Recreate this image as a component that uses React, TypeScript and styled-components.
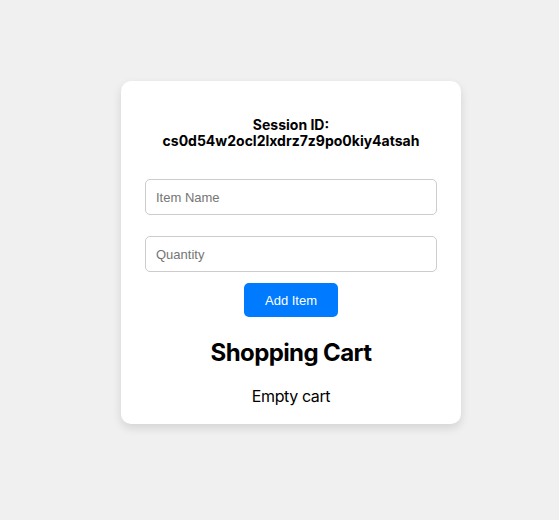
import React from "react";
import styled, { createGlobalStyle } from "styled-components";

const Global = createGlobalStyle`
  html, body { margin: 0; padding: 0; background: #f0f0f0; }
  body { font-family: Inter, "Liberation Sans", Arial, sans-serif; }
`;

const Page = styled.div`
  display: flex;
  justify-content: center;
  align-items: flex-start;
  padding: 81px 0 0 23px;
  min-height: 520px;
  box-sizing: border-box;
`;

const Card = styled.div`
  width: 340px;
  box-sizing: border-box;
  background: #fff;
  border-radius: 10px;
  box-shadow: 0 4px 10px rgba(0, 0, 0, 0.12);
  padding: 36px 24px 18px;
  display: flex;
  flex-direction: column;
  align-items: center;
`;

const SessionTitle = styled.h3`
  margin: 0 0 30px;
  font-size: 14px;
  line-height: 16px;
  font-weight: 700;
  color: #000;
  text-align: center;
`;

const Input = styled.input<{ $gap: number }>`
  width: 100%;
  height: 36px;
  box-sizing: border-box;
  padding: 0 10px;
  border: 1px solid #ccc;
  border-radius: 5px;
  font-family: "Liberation Sans", Arial, sans-serif;
  font-size: 13px;
  color: #000;
  margin-bottom: ${(p) => p.$gap}px;
  &::placeholder { color: #757575; }
`;

const Button = styled.button`
  width: 94px;
  height: 34px;
  border: none;
  border-radius: 5px;
  background: #007bff;
  color: #fff;
  font-family: "Liberation Sans", Arial, sans-serif;
  font-size: 13px;
  cursor: pointer;
`;

const CartTitle = styled.h2`
  margin: 21px 0 0;
  font-size: 24px;
  line-height: 30px;
  font-weight: 700;
  letter-spacing: -0.025em;
  color: #000;
`;

const Empty = styled.p`
  margin: 18px 0 0;
  font-size: 16px;
  line-height: 20px;
  letter-spacing: -0.025em;
  color: #000;
`;

export default function App() {
  return (
    <>
      <Global />
      <Page>
        <Card>
          <SessionTitle>
            Session ID:
            <br />
            cs0d54w2ocl2lxdrz7z9po0kiy4atsah
          </SessionTitle>
          <Input $gap={21} placeholder="Item Name" />
          <Input $gap={11} placeholder="Quantity" />
          <Button>Add Item</Button>
          <CartTitle>Shopping Cart</CartTitle>
          <Empty>Empty cart</Empty>
        </Card>
      </Page>
    </>
  );
}
